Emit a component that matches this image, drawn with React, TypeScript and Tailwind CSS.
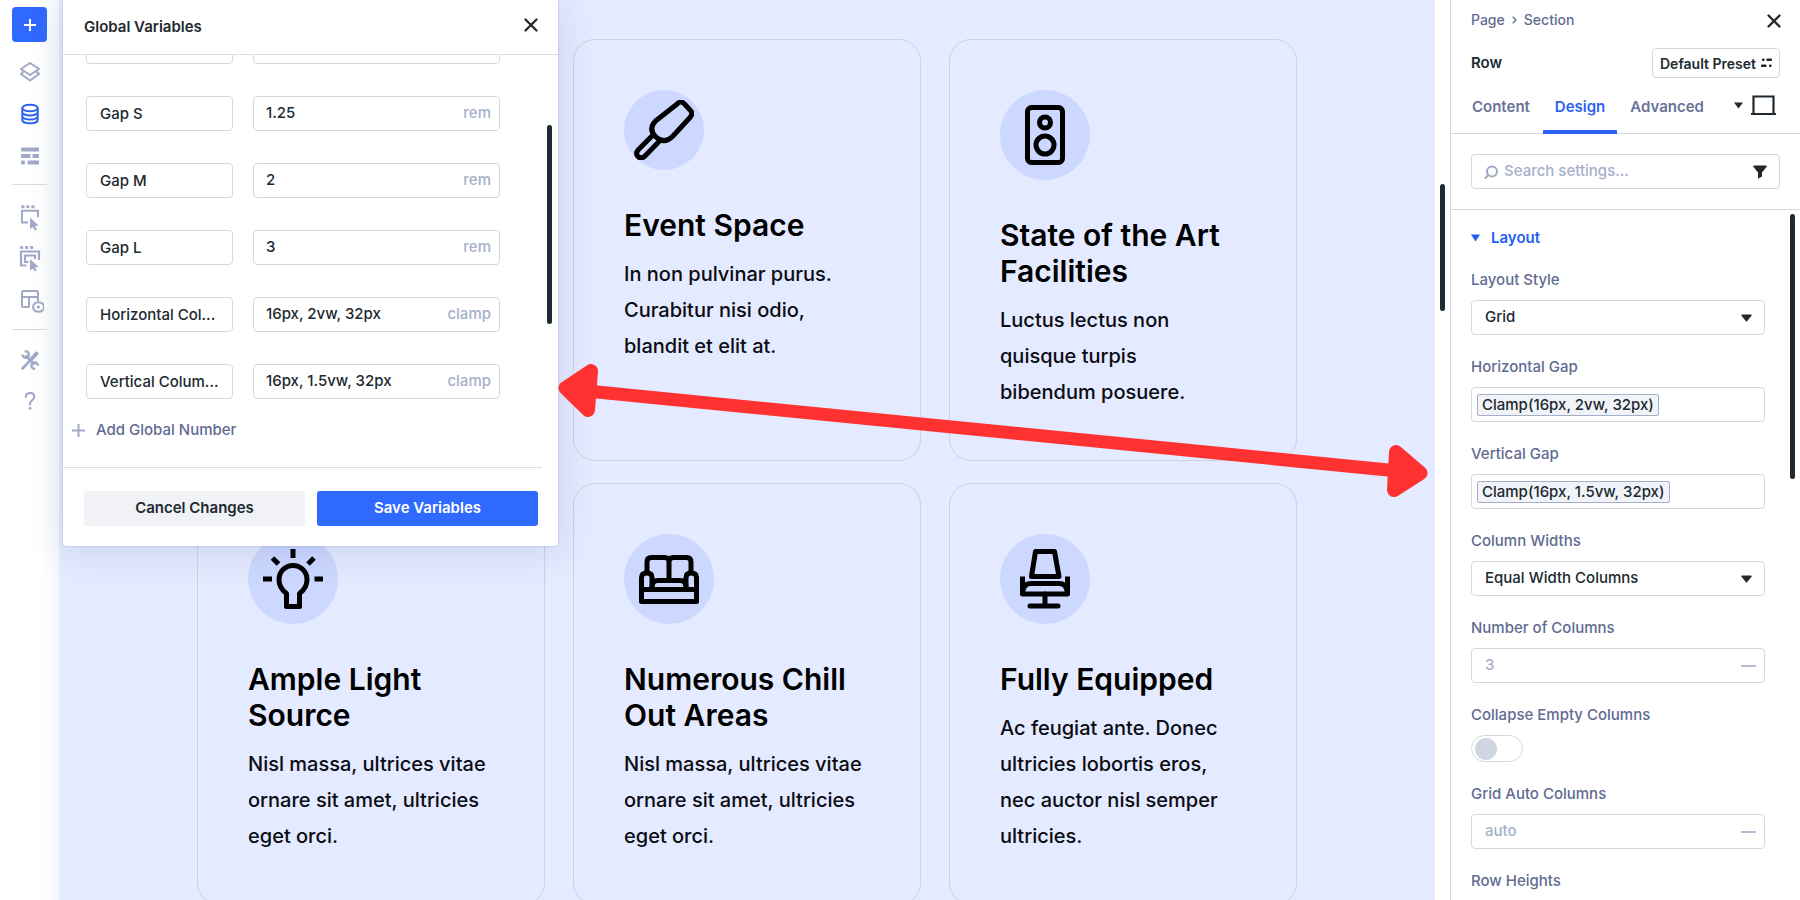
import type { ReactNode } from "react";

const fieldBox = "h-[35px] rounded-[4px] border border-[#d3d8e6] bg-white text-[15px] font-medium text-[#20292f] outline-none";

/* ---------- Sidebar icons ---------- */

function ToolIcon({ children }: { children: ReactNode }) {
  return (
    <svg width="28" height="28" viewBox="0 0 28 28" fill="none" stroke="currentColor" strokeWidth="2" aria-hidden="true">
      {children}
    </svg>
  );
}

const LayersIcon = () => (
  <ToolIcon>
    <path d="M14 5 23 11 14 17 5 11Z" strokeLinejoin="round" />
    <path d="M7.500 13.500 5 16 14 22.500 23 16 20.500 13.500" strokeLinejoin="round" strokeLinecap="round" />
  </ToolIcon>
);

const DatabaseIcon = () => (
  <ToolIcon>
    <ellipse cx="14" cy="8" rx="7.700" ry="3.300" />
    <path d="M6.300 8v12c0 1.900 3.400 3.300 7.700 3.300s7.700-1.400 7.700-3.300V8M6.300 12.200c0 1.800 3.400 3.200 7.700 3.200s7.700-1.400 7.700-3.200M6.300 16.300c0 1.800 3.400 3.200 7.700 3.200s7.700-1.400 7.700-3.200" />
  </ToolIcon>
);

const ListIcon = () => (
  <ToolIcon>
    <g fill="currentColor" stroke="none">
      <rect x="5" y="5.500" width="18" height="4" rx="1" />
      <rect x="5" y="12" width="9.500" height="4" rx="1" />
      <rect x="16.500" y="12" width="6.500" height="4" rx="1" />
      <rect x="5" y="18.500" width="4" height="4" rx="1" />
      <rect x="11.500" y="18.500" width="11.500" height="4" rx="1" />
    </g>
  </ToolIcon>
);

const PointerIcon = () => (
  <ToolIcon>
    <path d="M12 19.500H6V7.800h16v6.500" />
    <g fill="currentColor" stroke="none">
      <rect x="5.300" y="2.300" width="3.200" height="3" rx="1" />
      <rect x="10.300" y="2.300" width="3.200" height="3" rx="1" />
      <rect x="15.300" y="2.300" width="3.200" height="3" rx="1" />
      <path d="M14 14.500 22.500 22.500 18.800 22.900 20.800 26.500 18.800 27.500 16.900 23.900 14 26Z" />
    </g>
  </ToolIcon>
);

const MultiPointerIcon = () => (
  <ToolIcon>
    <path d="M10.500 20.500H5V6.500h18v8.500" strokeWidth="2.200" />
    <path d="M12.500 17H9V10.500h10v3.500" strokeWidth="2.200" />
    <g fill="currentColor" stroke="none">
      <rect x="4" y="1" width="3.200" height="3" rx="1" />
      <rect x="9" y="1" width="3.200" height="3" rx="1" />
      <rect x="14" y="1" width="3.200" height="3" rx="1" />
      <path d="M14 14 22.500 22 18.800 22.400 20.800 25.500 18.800 26.500 16.900 23.400 14 25.500Z" />
    </g>
  </ToolIcon>
);

const PreviewIcon = () => (
  <ToolIcon>
    <path d="M13 20H7.500A1.500 1.500 0 0 1 6 18.500V5.500A1.500 1.500 0 0 1 7.500 4h13A1.500 1.500 0 0 1 22 5.500V14M6 10h16M13 10v10" />
    <ellipse cx="22.500" cy="20" rx="5.500" ry="4.800" />
    <circle cx="22.500" cy="20" r="1.500" fill="currentColor" stroke="none" />
  </ToolIcon>
);

const ToolsIcon = () => (
  <ToolIcon>
    <path d="M6.500 22.500 15 13.500" strokeWidth="2.600" strokeLinecap="round" />
    <path d="M16 12.500 20.500 7.500" strokeWidth="4" strokeLinecap="round" />
    <path d="M9.500 9.500 18.500 18.500" strokeWidth="2.800" />
    <path d="M6.500 8.500a3.200 3.200 0 1 0 2.300-3M21.800 19.800a3.200 3.200 0 1 0-2.500 3" strokeWidth="2.400" />
  </ToolIcon>
);

const HelpIcon = () => (
  <ToolIcon>
    <path d="M9.800 10c0-2.400 1.800-4 4.300-4s4.200 1.500 4.200 3.700c0 3.300-4.300 3.600-4.300 7v.8" strokeLinecap="round" />
    <circle cx="14" cy="21.300" r="1.400" fill="currentColor" stroke="none" />
  </ToolIcon>
);

function ToolButton({ label, active, children }: { label: string; active?: boolean; children: ReactNode }) {
  return (
    <button
      type="button"
      aria-label={label}
      className={active ? "block size-7 text-[#2b62f0]" : "block size-7 text-[#a2a8c8]"}
    >
      {children}
    </button>
  );
}

function Sidebar() {
  return (
    <nav aria-label="Builder tools" className="flex w-[59px] shrink-0 flex-col items-center bg-gradient-to-r from-white from-70% to-[#f7f8fc] pt-[7px]">
      <button type="button" aria-label="Add" className="flex size-[35px] items-center justify-center rounded-[4px] bg-[#3069ff] text-white">
        <svg width="14" height="14" viewBox="0 0 14 14" stroke="currentColor" strokeWidth="2" aria-hidden="true">
          <path d="M7 1v12M1 7h12" />
        </svg>
      </button>
      <div className="mt-4 flex flex-col gap-[14px]">
        <ToolButton label="Layers"><LayersIcon /></ToolButton>
        <ToolButton label="Global variables" active><DatabaseIcon /></ToolButton>
        <ToolButton label="Wireframe"><ListIcon /></ToolButton>
      </div>
      <hr className="mt-[14px] w-[35px] border-[#d9dce8]" />
      <div className="mt-[18px] flex flex-col gap-[14px]">
        <ToolButton label="Select element"><PointerIcon /></ToolButton>
        <ToolButton label="Select many elements"><MultiPointerIcon /></ToolButton>
        <ToolButton label="Preview layout"><PreviewIcon /></ToolButton>
      </div>
      <hr className="mt-[14px] w-[35px] border-[#d9dce8]" />
      <div className="mt-4 flex flex-col gap-[13px]">
        <ToolButton label="Tools"><ToolsIcon /></ToolButton>
        <ToolButton label="Help"><HelpIcon /></ToolButton>
      </div>
    </nav>
  );
}

/* ---------- Feature cards ---------- */

function Glyph({ children }: { children: ReactNode }) {
  return (
    <svg width="60" height="60" viewBox="0 0 60 60" fill="none" stroke="#000" strokeWidth="5" strokeLinejoin="round" aria-hidden="true">
      {children}
    </svg>
  );
}

const BottleGlyph = () => (
  <Glyph>
    <path d="M42.500 4.500Q46.500 0 50.500 4L56.500 10.500Q59.500 13.500 56 17.500L38.500 36.500Q30 45 21.500 36.500Q14 29 21.500 21Z" />
    <path d="M19 35 4.500 49.500Q1 53.500 4 56.500Q7.500 59.500 11 56L25.500 41" />
  </Glyph>
);

const SpeakerGlyph = () => (
  <Glyph>
    <rect x="12.500" y="2.500" width="35" height="55" rx="4" />
    <circle cx="30" cy="17.500" r="5.500" />
    <circle cx="30" cy="40" r="9" />
  </Glyph>
);

const BulbGlyph = () => (
  <Glyph>
    <path d="M23.500 57.500V44.500Q16 39 16 30.500A14 14 0 0 1 44 30.500Q44 39 36.500 44.500V57.500Z" />
    <path d="M30 0v9M0 30h9M51.500 30h9M9.500 9 15.500 15M51 9 45 15" />
  </Glyph>
);

const SofaGlyph = () => (
  <Glyph>
    <path d="M8 25V13Q8 8.500 12.500 8.500H25.500Q30 8.500 30 12.500Q30 8.500 34.500 8.500H47.500Q52 8.500 52 13V25M30 12V31" />
    <path d="M2.500 52.500V28.500Q2.500 24 8 24Q13 24 13 28.500V40.500H47V28.500Q47 24 52 24Q57.500 24 57.500 28.500V52.500ZM2.500 40.500H57.500" />
    <path d="M13 38Q13 31.500 19 31.500H41Q47 31.500 47 38" />
  </Glyph>
);

const ChairGlyph = () => (
  <Glyph>
    <path d="M20.500 2.500H39.500L44 27.500H16.500Z" />
    <path d="M7.500 27.500V45H52.500V27.500M8 42Q9 34.500 16 34.500H44Q51 34.500 52 42" />
    <path d="M30 45V57M15 57H43" strokeLinecap="round" />
  </Glyph>
);

interface CardProps {
  title: string;
  text: string;
  icon: ReactNode;
  small?: boolean;
  second?: boolean;
}

const cards: CardProps[] = [
  { title: "Event Space", text: "In non pulvinar purus. Curabitur nisi odio, blandit\u00a0et elit at.", icon: <BottleGlyph />, small: true, second: true },
  { title: "State of the Art Facilities", text: "Luctus lectus non quisque\u00a0turpis bibendum\u00a0posuere.", icon: <SpeakerGlyph /> },
  { title: "Ample Light Source", text: "Nisl massa, ultrices vitae ornare sit amet, ultricies eget orci.", icon: <BulbGlyph /> },
  { title: "Numerous Chill Out Areas", text: "Nisl massa, ultrices vitae ornare sit amet, ultricies eget orci.", icon: <SofaGlyph /> },
  { title: "Fully Equipped", text: "Ac feugiat ante. Donec ultricies lobortis eros, nec\u00a0auctor nisl semper ultricies.", icon: <ChairGlyph /> },
];

function Card({ title, text, icon, small, second }: CardProps) {
  return (
    <article className={second ? "col-start-2 min-h-[421px] rounded-[22px] border border-[#ccd2de] p-[50px]" : "min-h-[421px] rounded-[22px] border border-[#ccd2de] p-[50px]"}>
      <div className={small ? "flex size-20 items-center justify-center rounded-full bg-[#ccd8ff]" : "flex size-[90px] items-center justify-center rounded-full bg-[#ccd8ff]"}>
        {icon}
      </div>
      <h3 className="mt-[37px] text-[30px] leading-9 font-semibold text-black">{title}</h3>
      <p className="mt-[13px] text-[20px] leading-9 font-medium text-[#0a0c12]">{text}</p>
    </article>
  );
}

/* ---------- Global variables window ---------- */

const variables = [
  { name: "", value: "", unit: "" },
  { name: "Gap S", value: "1.25", unit: "rem" },
  { name: "Gap M", value: "2", unit: "rem" },
  { name: "Gap L", value: "3", unit: "rem" },
  { name: "Horizontal Col...", value: "16px, 2vw, 32px", unit: "clamp" },
  { name: "Vertical Colum...", value: "16px, 1.5vw, 32px", unit: "clamp" },
];

function CloseIcon() {
  return (
    <svg width="14" height="14" viewBox="0 0 14 14" stroke="currentColor" strokeWidth="2.300" strokeLinecap="round" aria-hidden="true">
      <path d="M1.500 1.500 12.500 12.500M12.500 1.500 1.500 12.500" />
    </svg>
  );
}

function VariablesWindow() {
  return (
    <section aria-label="Global Variables" className="absolute top-0 left-1 z-10 flex w-[495px] flex-col rounded-b-[4px] bg-white shadow-[0_4px_36px_rgba(60,75,130,0.16),0_0_2px_rgba(60,75,130,0.3)]">
      <header className="flex h-[55px] items-center justify-between border-b border-[#d9dde8] pr-5 pl-[21px] text-[#20292f]">
        <h2 className="text-[15px] font-semibold">Global Variables</h2>
        <button type="button" aria-label="Close" className="mb-1"><CloseIcon /></button>
      </header>
      <div className="flex h-[412px] overflow-hidden">
        <div className="-mt-[26px] flex-1">
          <div className="flex flex-col gap-8 pl-[23px]">
            {variables.map((v) => (
              <div key={v.name} className="flex gap-5">
                <input aria-label="Variable name" defaultValue={v.name} className={`${fieldBox} w-[147px] px-[13px]`} />
                <div className={`${fieldBox} flex w-[247px] items-center pr-2 pl-3`}>
                  <input aria-label={`${v.name} value`} defaultValue={v.value} className="min-w-0 flex-1 outline-none" />
                  <button type="button" className="text-[#a5afc9]">{v.unit}</button>
                </div>
              </div>
            ))}
          </div>
          <button type="button" className="mt-[21px] ml-[9px] flex h-5 items-center gap-[11px] text-[15px] font-medium text-[#5f6b92]">
            <svg width="13" height="13" viewBox="0 0 13 13" stroke="#a2a8c8" strokeWidth="2" aria-hidden="true">
              <path d="M6.500 0v13M0 6.500h13" />
            </svg>
            Add Global Number
          </button>
        </div>
        <div className="mt-[70px] mr-[6px] h-[199px] w-[5px] rounded-full bg-[#1f2a33]" />
      </div>
      <footer className="mr-4 grid grid-cols-2 gap-3 border-t border-[#d9dde8] pt-[23px] pr-1 pb-5 pl-[21px]">
        <button type="button" className="h-[35px] rounded-[3px] bg-[#f1f2f6] text-[15px] font-semibold text-[#20292f]">Cancel Changes</button>
        <button type="button" className="h-[35px] rounded-[3px] bg-[#3069ff] text-[15px] font-semibold text-white">Save Variables</button>
      </footer>
    </section>
  );
}

function DoubleArrow() {
  return (
    <svg width="870" height="134" viewBox="558 364 870 134" className="pointer-events-none absolute top-[364px] left-[499px] z-20" fill="#ff3131" stroke="#ff3131" aria-hidden="true">
      <path d="M592 391.500 1393 470.500" strokeWidth="13" />
      <path d="M565.500 388 591 371 588 410Z" strokeWidth="14" strokeLinejoin="round" />
      <path d="M1420.500 473 1396 452 1394 490Z" strokeWidth="14" strokeLinejoin="round" />
    </svg>
  );
}

/* ---------- Settings panel ---------- */

function Caret() {
  return (
    <svg width="11" height="8" viewBox="0 0 11 8" fill="currentColor" aria-hidden="true">
      <path d="M1 .5h9a.7.7 0 0 1 .5 1.200L6 7.200a.7.7 0 0 1-1 0L.5 1.700A.7.7 0 0 1 1 .5Z" />
    </svg>
  );
}

function Field({ id, label, children }: { id: string; label: string; children?: ReactNode }) {
  return (
    <div className="flex flex-col gap-[10px]">
      <label htmlFor={id} className="text-[15px] leading-5 font-medium text-[#5f6b92]">{label}</label>
      {children}
    </div>
  );
}

function SelectField({ id, label, value }: { id: string; label: string; value: string }) {
  return (
    <Field id={id} label={label}>
      <div className="relative">
        <select id={id} className={`${fieldBox} w-full appearance-none px-[13px]`}>
          <option>{value}</option>
        </select>
        <span className="pointer-events-none absolute inset-y-0 right-[13px] flex items-center text-[#20292f]"><Caret /></span>
      </div>
    </Field>
  );
}

function ChipField({ id, label, value }: { id: string; label: string; value: string }) {
  return (
    <Field id={id} label={label}>
      <div className={`${fieldBox} flex items-center px-[5px]`}>
        <button type="button" className="h-[22px] shrink-0 rounded-[2px] border border-[#a3aec9] bg-[#f1f3f9] px-1 text-[15px] leading-5">{value}</button>
        <input id={id} className="min-w-0 flex-1 outline-none" />
      </div>
    </Field>
  );
}

function NumberField({ id, label, placeholder }: { id: string; label: string; placeholder: string }) {
  return (
    <Field id={id} label={label}>
      <div className={`${fieldBox} flex items-center pr-2 pl-[13px]`}>
        <input id={id} placeholder={placeholder} className="min-w-0 flex-1 outline-none placeholder:text-[#a5afc9]" />
        <button type="button" aria-label={`${label} unit`} className="h-[2px] w-[15px] bg-[#b4bccf]" />
      </div>
    </Field>
  );
}

function SettingsPanel() {
  return (
    <aside className="flex w-[350px] shrink-0 flex-col border-l border-[#d3d8e6] bg-white text-[#20292f]">
      <div className="flex h-[41px] items-center justify-between pr-[19px] pl-5">
        <nav aria-label="Breadcrumb" className="mb-[2px] flex items-center gap-[7px] text-[14px] font-medium text-[#5f6b92]">
          <a href="#page">Page</a>
          <svg width="5" height="8" viewBox="0 0 5 8" fill="none" stroke="currentColor" strokeWidth="1.300" aria-hidden="true">
            <path d="M.7.7 4 4 .7 7.300" />
          </svg>
          <a href="#section">Section</a>
        </nav>
        <button type="button" aria-label="Close"><CloseIcon /></button>
      </div>
      <div className="mt-[7px] flex items-center justify-between pr-5 pl-5">
        <h2 className="text-[15px] font-semibold">Row</h2>
        <button type="button" className="flex h-[30px] items-center gap-[5px] rounded-[4px] border border-[#d3d8e6] px-[7px] text-[14px] font-semibold">
          Default Preset
          <svg width="11" height="10" viewBox="0 0 11 10" fill="currentColor" aria-hidden="true">
            <rect x="1" y=".5" width="2.500" height="2.500" rx=".7" />
            <rect x="5.500" y=".5" width="5.500" height="2.500" rx=".7" />
            <rect x="0" y="6.500" width="5.500" height="2.500" rx=".7" />
            <rect x="8" y="6.500" width="2.500" height="2.500" rx=".7" />
          </svg>
        </button>
      </div>
      <div className="flex h-14 justify-between border-b border-[#d3d8e6] pr-6 pl-[21px]">
        <div role="tablist" className="-mb-px flex text-[15px] font-semibold text-[#68739a]">
          <button type="button" role="tab" aria-selected="false" className="pt-[2px] pr-[13px]">Content</button>
          <button type="button" role="tab" aria-selected="true" className="border-b-4 border-[#2b62f0] px-3 pt-[6px] text-[#2b62f0]">Design</button>
          <button type="button" role="tab" aria-selected="false" className="pt-[2px] pl-[13px]">Advanced</button>
        </div>
        <button type="button" aria-label="Device view" className="flex items-center gap-2">
          <svg width="9" height="7" viewBox="0 0 9 7" fill="currentColor" aria-hidden="true"><path d="M0 .5h9L4.500 6.500Z" /></svg>
          <svg width="25" height="21" viewBox="0 0 25 21" fill="none" stroke="currentColor" strokeWidth="2.200" aria-hidden="true">
            <path d="M2.500 19V1.500h20V19M0 19h25" />
          </svg>
        </button>
      </div>
      <div className="border-b border-[#d3d8e6] px-5 py-5">
        <div className={`${fieldBox} flex items-center pr-3 pl-3`}>
          <svg width="14" height="14" viewBox="0 0 14 14" fill="none" stroke="#a0a9c4" strokeWidth="2" strokeLinecap="round" aria-hidden="true">
            <circle cx="8" cy="6.500" r="5" />
            <path d="M4.500 10 1.500 13" />
          </svg>
          <input aria-label="Search settings" placeholder="Search settings..." className="ml-[6px] min-w-0 flex-1 outline-none placeholder:text-[#a5afc9]" />
          <button type="button" aria-label="Filter">
            <svg width="14" height="14" viewBox="0 0 14 14" fill="currentColor" aria-hidden="true">
              <path d="M1 .5h12a.8.8 0 0 1 .6 1.300L9 7.500V11.500L5 13.800V7.500L.4 1.800A.8.800 0 0 1 1 .5Z" />
            </svg>
          </button>
        </div>
      </div>
      <div className="flex min-h-0 flex-1 overflow-hidden">
        <div className="flex min-w-0 flex-1 flex-col pt-[18px] pl-5">
          <button type="button" className="flex h-5 shrink-0 items-center gap-[11px] text-[15px] font-semibold text-[#2260f5]">
            <svg width="9" height="8" viewBox="0 0 9 8" fill="currentColor" aria-hidden="true"><path d="M0 .5h9L4.500 7.500Z" /></svg>
            Layout
          </button>
          <div className="mt-[22px] flex flex-col gap-[22px]">
            <SelectField id="layout-style" label="Layout Style" value="Grid" />
            <ChipField id="horizontal-gap" label="Horizontal Gap" value="Clamp(16px, 2vw, 32px)" />
            <ChipField id="vertical-gap" label="Vertical Gap" value="Clamp(16px, 1.5vw, 32px)" />
            <SelectField id="column-widths" label="Column Widths" value="Equal Width Columns" />
            <NumberField id="columns" label="Number of Columns" placeholder="3" />
            <Field id="collapse" label="Collapse Empty Columns">
              <input
                id="collapse"
                type="checkbox"
                role="switch"
                className="flex h-[27px] w-[52px] appearance-none items-center rounded-full border border-[#d3d8e6] bg-white pl-[3px] before:block before:size-[22px] before:rounded-full before:bg-[#d0d5e2] checked:justify-end"
              />
            </Field>
            <NumberField id="auto-columns" label="Grid Auto Columns" placeholder="auto" />
            <Field id="row-heights" label="Row Heights">
              <input id="row-heights" className={`${fieldBox} w-full px-[13px]`} />
            </Field>
          </div>
        </div>
        <div className="mt-1 mr-[5px] ml-[25px] h-[265px] w-[5px] shrink-0 rounded-full bg-[#1f2a33]" />
      </div>
    </aside>
  );
}

export default function App() {
  return (
    <div className="flex h-screen overflow-hidden bg-white font-['Inter',sans-serif]">
      <Sidebar />
      <main className="relative min-w-0 flex-1 bg-[#e4eaff]">
        <div className="h-full overflow-hidden">
          <div className="mx-auto mt-[39px] grid w-full max-w-[1100px] grid-cols-3 gap-x-7 gap-y-[22px]">
            {cards.map((card) => (
              <Card key={card.title} {...card} />
            ))}
          </div>
        </div>
        <VariablesWindow />
        <DoubleArrow />
      </main>
      <div className="w-[15px] shrink-0 pt-[184px] pl-[5px]">
        <div className="h-[127px] w-[5px] rounded-full bg-[#1f2a33]" />
      </div>
      <SettingsPanel />
    </div>
  );
}
